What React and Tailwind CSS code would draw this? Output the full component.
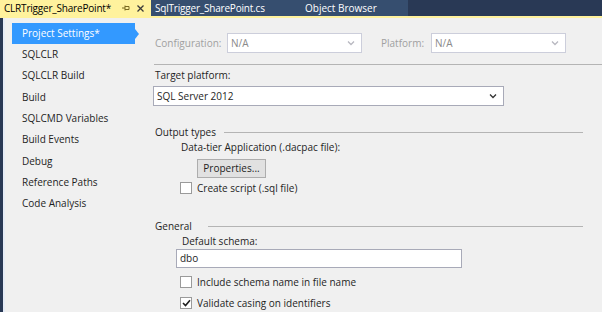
import React from "react";

const font = { fontFamily: '"Open Sans", "Noto Sans", sans-serif' };

function Chevron({ color = "#1e1e1e" }) {
  return (
    <svg width="8" height="6" viewBox="0 0 8 6">
      <path d="M1 1.5 L4 4.5 L7 1.5" fill="none" stroke={color} strokeWidth="1.3" />
    </svg>
  );
}

function Combo({ value, width, disabled }) {
  return (
    <div
      className={`flex h-[20px] items-center justify-between border bg-white pl-[3px] pr-[6px] ${
        disabled ? "border-[#cccedb] text-[#8a8a8a]" : "border-[#a8aab8] text-[#1e1e1e]"
      }`}
      style={{ width }}
    >
      <span>{value}</span>
      <Chevron color={disabled ? "#b8b8c0" : "#333"} />
    </div>
  );
}

function Check({ checked, label, className = "" }) {
  return (
    <div className={`flex h-[14px] items-center ${className}`}>
      <div className="flex h-[12px] w-[12px] items-center justify-center border border-[#9a9a9a] bg-white">
        {checked && (
          <svg width="9" height="8" viewBox="0 0 9 8">
            <path d="M1 4 L3.5 6.5 L8 1.2" fill="none" stroke="#1e1e1e" strokeWidth="1.6" />
          </svg>
        )}
      </div>
      <span className="ml-[5px]">{label}</span>
    </div>
  );
}

const navItems = [
  "SQLCLR",
  "SQLCLR Build",
  "Build",
  "SQLCMD Variables",
  "Build Events",
  "Debug",
  "Reference Paths",
  "Code Analysis",
];

export default function App() {
  return (
    <div
      className="flex h-[312px] w-[602px] flex-col overflow-hidden bg-[#293955] text-[10px] text-[#1e1e1e]"
      style={font}
    >
      {/* tab bar */}
      <div className="flex h-[16px] shrink-0 items-stretch">
        <div className="flex w-[151px] items-center bg-[#fff29d] pl-[4px] pr-[6px] text-[10px] tracking-[-0.2px] text-black">
          <span>CLRTrigger_SharePoint*</span>
          <svg className="ml-auto" width="9" height="8" viewBox="0 0 9 8">
            <path d="M1 4 H4 M4 1.5 V6.5 M4 2.5 H8 M4 5.5 H8 M8 2.5 V5.5" fill="none" stroke="#7a6a20" strokeWidth="1" />
          </svg>
          <svg className="ml-[6px]" width="9" height="9" viewBox="0 0 9 9">
            <path d="M1.5 1.5 L7.5 7.5 M7.5 1.5 L1.5 7.5" fill="none" stroke="#3a3a3a" strokeWidth="1.3" />
          </svg>
        </div>
        <div className="flex w-[150px] items-center bg-[#364e6f] pl-[4px] text-[10px] tracking-[-0.2px] text-white">
          SqlTrigger_SharePoint.cs
        </div>
        <div className="flex w-[107px] items-center bg-[#364e6f] pl-[4px] text-[10px] text-white">
          Object Browser
        </div>
      </div>
      <div className="h-[2px] shrink-0 bg-[#fff29d]" />

      {/* body */}
      <div className="flex flex-1 pl-[3px]">
        <div className="flex flex-1 border-l-[2px] border-[#e6ecf6] bg-[#f0f0f0]">
          {/* nav */}
          <div className="w-[135px] shrink-0 pt-[5px]">
            <div className="relative ml-[7px] flex h-[21px] w-[123px] items-center bg-[#3399ff] pl-[10px] text-white">
              Project Settings*
              <div className="absolute right-[-4px] top-[6px] h-0 w-0 border-y-[5px] border-l-[4px] border-y-transparent border-l-[#3399ff]" />
            </div>
            {navItems.map((t) => (
              <div key={t} className="flex h-[21.3px] items-center pl-[17px]">
                {t}
              </div>
            ))}
          </div>

          {/* content */}
          <div className="flex flex-1 flex-col">
            <div className="ml-[13px] mt-[15px] flex h-[20px] items-center">
              <span className="ml-[2px] w-[72px] text-[#a0a0a0]">Configuration:</span>
              <Combo value="N/A" width={135} disabled />
              <span className="ml-[19px] w-[50px] text-[#a0a0a0]">Platform:</span>
              <Combo value="N/A" width={135} disabled />
            </div>
            <div className="ml-[14px] mt-[11px] h-px bg-[#b4b4b4]" />
            <div className="ml-[15px] flex h-[20px] items-center">Target platform:</div>
            <div className="ml-[13px] mt-[1px]">
              <Combo value="SQL Server 2012" width={351} />
            </div>
            <div className="ml-[15px] mt-[19px] flex h-[14px] items-center">
              <span>Output types</span>
              <div className="ml-[8px] mr-[19px] h-px flex-1 bg-[#b4b4b4]" />
            </div>
            <div className="ml-[41px] mt-[1px] flex h-[14px] items-center">
              Data-tier Application (.dacpac file):
            </div>
            <div className="ml-[57px] mt-[5px] flex h-[19px] w-[69px] items-center justify-center border border-[#adadad] bg-[#e1e1e1]">
              Properties...
            </div>
            <Check className="ml-[40px] mt-[3px]" label="Create script (.sql file)" />
            <div className="ml-[15px] mt-[24px] flex h-[14px] items-center">
              <span>General</span>
              <div className="ml-[16px] mr-[19px] h-px flex-1 bg-[#b4b4b4]" />
            </div>
            <div className="ml-[42px] mt-[1px] flex h-[14px] items-center">Default schema:</div>
            <div className="ml-[36px] mt-[1px] flex h-[19px] w-[286px] items-center border border-[#a8aab8] bg-white pl-[3px]">
              dbo
            </div>
            <Check className="ml-[40px] mt-[7px]" label="Include schema name in file name" />
            <Check className="ml-[40px] mt-[7px]" checked label="Validate casing on identifiers" />
          </div>
        </div>
      </div>
    </div>
  );
}
